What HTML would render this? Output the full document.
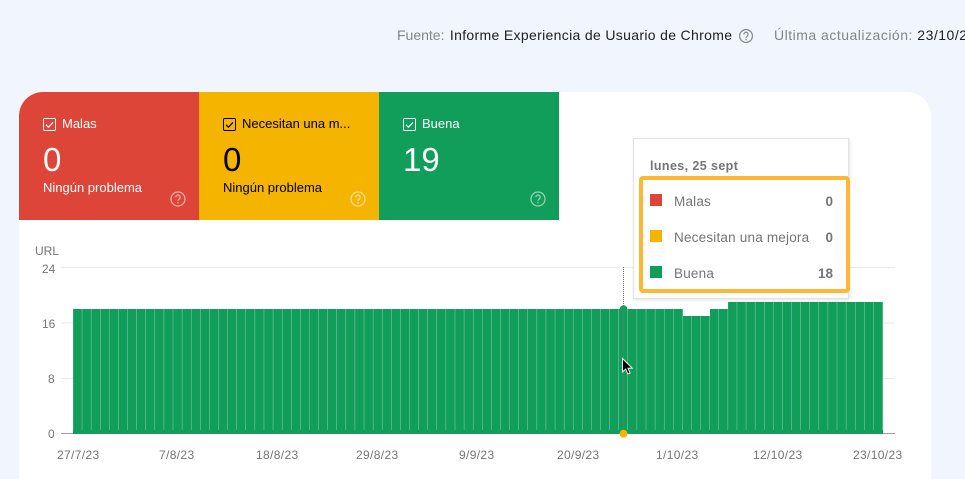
<!DOCTYPE html>
<html><head><meta charset="utf-8">
<style>
html,body{margin:0;padding:0;height:479px;overflow:hidden}
body{width:965px;background:#f1f5fd;position:relative;font-family:"Liberation Sans",sans-serif}
.a{position:absolute;white-space:nowrap}
.card{position:absolute;left:19px;top:92px;width:912px;height:387px;background:#fff;border-radius:24px 24px 0 0;overflow:hidden}
.tile{position:absolute;top:0;width:180px;height:128px}
.tile svg{position:absolute}
.lb{position:absolute;left:43px;top:24px;font-size:13px;line-height:16px;white-space:nowrap}
.n{position:absolute;left:24px;top:48px;font-size:33px;line-height:40px}
.s{position:absolute;left:24px;top:88px;font-size:13px;line-height:16px;white-space:nowrap}
.ax{position:absolute;font-size:12px;color:#757575;line-height:14px;white-space:nowrap}
.x{letter-spacing:.35px;top:448px}
.tt{position:absolute;font-size:13.5px;color:#757575;line-height:16px;white-space:nowrap}
.sw{position:absolute;left:650px;width:12px;height:12px}
</style></head><body>

<div class="a" style="left:397px;top:27px;font-size:14px;line-height:17px;color:#80868b">Fuente: <span style="color:#202124;letter-spacing:.33px;margin-left:1.5px">Informe Experiencia de Usuario de Chrome</span></div>
<svg class="a" style="left:738px;top:28px" width="16" height="16" viewBox="0 0 16 16" fill="none" stroke="#80868b" stroke-width="1.2"><circle cx="8" cy="8" r="6.4"/><path d="M5.9 6.4a2.1 2.1 0 1 1 3.3 1.7c-.8.5-1.2.9-1.2 1.7"/><path d="M8 10.9v1.3"/></svg>
<div class="a" style="left:774px;top:27px;font-size:14px;line-height:17px;color:#80868b;letter-spacing:.5px">Última actualización: <span style="color:#202124">23/10/23</span></div>

<div class="card">
  <div class="tile" style="left:0;background:#dd4539;color:#fff">
    <svg style="left:24px;top:26px" width="13" height="13" viewBox="0 0 13 13" fill="none" stroke="#fff"><rect x=".5" y=".5" width="12" height="12" rx="1.2"/><path d="M3 6.8l2.4 2.4L10 4.4" stroke-width="1.2"/></svg>
    <div class="lb">Malas</div><div class="n">0</div><div class="s">Ningún problema</div>
    <svg style="left:151px;top:99px" width="16" height="16" viewBox="0 0 16 16" fill="none" stroke="#fff" stroke-opacity=".55" stroke-width="1.3"><circle cx="8" cy="8" r="7"/><path d="M5.8 6.3a2.2 2.2 0 1 1 3.4 1.8c-.8.5-1.2.9-1.2 1.7"/><path d="M8 11v1.4"/></svg>
  </div>
  <div class="tile" style="left:180px;background:#f4b400;color:#000">
    <svg style="left:24px;top:26px" width="13" height="13" viewBox="0 0 13 13" fill="none" stroke="#000"><rect x=".5" y=".5" width="12" height="12" rx="1.2"/><path d="M3 6.8l2.4 2.4L10 4.4" stroke-width="1.2"/></svg>
    <div class="lb">Necesitan una m...</div><div class="n">0</div><div class="s">Ningún problema</div>
    <svg style="left:151px;top:99px" width="16" height="16" viewBox="0 0 16 16" fill="none" stroke="#fff" stroke-opacity=".55" stroke-width="1.3"><circle cx="8" cy="8" r="7"/><path d="M5.8 6.3a2.2 2.2 0 1 1 3.4 1.8c-.8.5-1.2.9-1.2 1.7"/><path d="M8 11v1.4"/></svg>
  </div>
  <div class="tile" style="left:360px;background:#109e5a;color:#fff">
    <svg style="left:24px;top:26px" width="13" height="13" viewBox="0 0 13 13" fill="none" stroke="#fff"><rect x=".5" y=".5" width="12" height="12" rx="1.2"/><path d="M3 6.8l2.4 2.4L10 4.4" stroke-width="1.2"/></svg>
    <div class="lb">Buena</div><div class="n">19</div>
    <svg style="left:151px;top:99px" width="16" height="16" viewBox="0 0 16 16" fill="none" stroke="#fff" stroke-opacity=".55" stroke-width="1.3"><circle cx="8" cy="8" r="7"/><path d="M5.8 6.3a2.2 2.2 0 1 1 3.4 1.8c-.8.5-1.2.9-1.2 1.7"/><path d="M8 11v1.4"/></svg>
  </div>
</div>

<svg class="a" style="left:0;top:0" width="965" height="479">
  <defs>
    <pattern id="p" patternUnits="userSpaceOnUse" x="73.2" y="0" width="9.096" height="479">
      <rect x="8.6" y="0" width="1" height="479" fill="#8fcfae"/>
    </pattern>
  </defs>
  <g fill="#e8eaed">
    <rect x="61" y="267" width="834" height="1"/>
    <rect x="61" y="322.5" width="834" height="1"/>
    <rect x="61" y="378" width="834" height="1"/>
  </g>
  <rect x="61" y="433" width="834" height="1" fill="#9aa0a6"/>
  <path d="M73 434V309H683V316H710V309H728V302H883V434Z" fill="#109e5a"/>
  <path d="M73 430V309H683V316H710V309H728V302H883V430Z" fill="url(#p)"/>
  <circle cx="623.5" cy="309" r="3.8" fill="#109e5a"/>
  <line x1="623.5" y1="267" x2="623.5" y2="433" stroke="#757575" stroke-dasharray="1 1"/>
  <circle cx="623.5" cy="433.7" r="4" fill="#f4b400"/>
  <path d="M622.5 358.5V372l3.2-3 2.2 5 2.2-1-2.2-4.8h4.3Z" fill="#000" stroke="#fff" stroke-width=".9"/>
</svg>

<div class="ax" style="left:35px;top:244px">URL</div>
<div class="ax" style="left:42px;top:262px">24</div>
<div class="ax" style="left:42px;top:317px">16</div>
<div class="ax" style="left:48px;top:372px">8</div>
<div class="ax" style="left:48px;top:427px">0</div>
<div class="ax x" style="left:57px">27/7/23</div>
<div class="ax x" style="left:159px">7/8/23</div>
<div class="ax x" style="left:256px">18/8/23</div>
<div class="ax x" style="left:356px">29/8/23</div>
<div class="ax x" style="left:459px">9/9/23</div>
<div class="ax x" style="left:557px">20/9/23</div>
<div class="ax x" style="left:656px">1/10/23</div>
<div class="ax x" style="left:753px">12/10/23</div>
<div class="ax x" style="left:853px">23/10/23</div>

<div class="a" style="left:633px;top:138px;width:216px;height:161px;background:#fff;box-sizing:border-box;border:1px solid #e3e3e3;box-shadow:1px 1px 3px rgba(0,0,0,.12)"></div>
<div class="a" style="left:650px;top:158px;font-size:12.5px;font-weight:bold;line-height:16px;color:#757575;letter-spacing:.4px">lunes, 25 sept</div>
<div class="a" style="left:639px;top:176px;width:211px;height:117px;box-sizing:border-box;border:4px solid #ffb833;border-radius:4px"></div>
<div class="sw" style="top:194px;background:#dd4539"></div>
<div class="sw" style="top:230px;background:#f4b400"></div>
<div class="sw" style="top:266px;background:#109e5a"></div>
<div class="tt" style="left:674px;top:194px;letter-spacing:.2px">Malas</div>
<div class="tt" style="left:674px;top:230px;letter-spacing:.2px">Necesitan una mejora</div>
<div class="tt" style="left:674px;top:266px;letter-spacing:.2px">Buena</div>
<div class="tt" style="right:132px;top:194px;font-weight:bold">0</div>
<div class="tt" style="right:132px;top:230px;font-weight:bold">0</div>
<div class="tt" style="right:132px;top:266px;font-weight:bold">18</div>
</body></html>
